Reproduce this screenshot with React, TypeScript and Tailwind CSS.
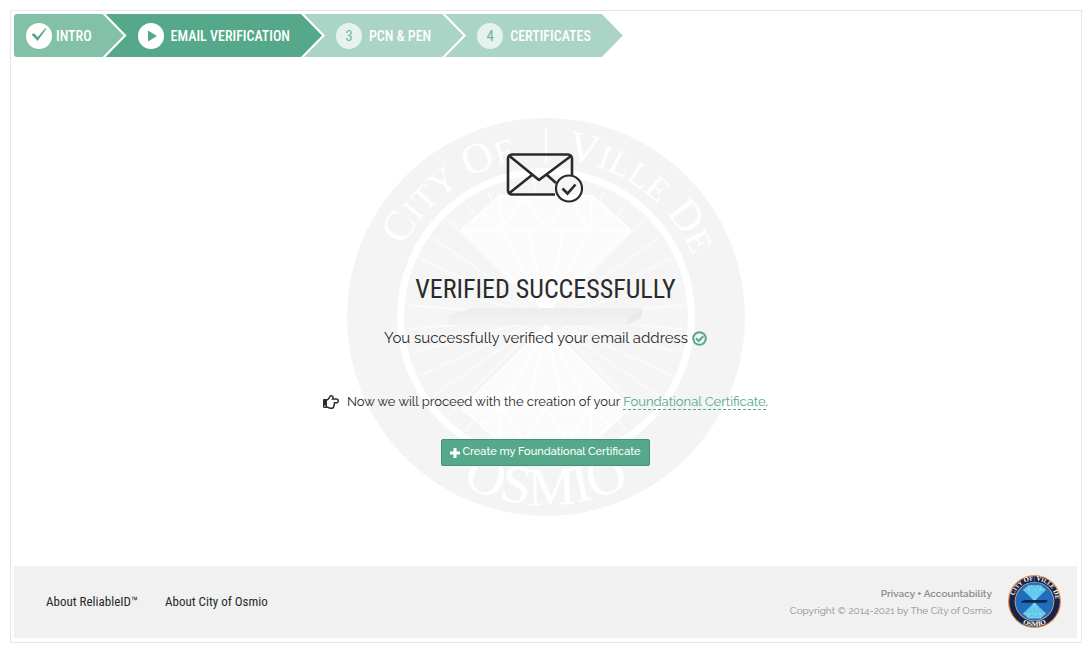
import { useId } from "react";
import type { ReactNode } from "react";
import { FaRegHandPointRight } from "react-icons/fa";

type SealPalette = {
  edge: string;
  ring: string;
  innerEdge: string;
  field: string;
  rays: string;
  gem: string;
  facet: string;
  barTop: string;
  barFront: string;
  barSide: string;
  letters: string;
};

type SealLettering = {
  weight: number;
  capital: number;
  small: number;
  leftStart: number;
  rightStart: number;
  bottom: number;
};

const watermark: SealPalette = {
  edge: "#f4f4f4",
  ring: "#f4f4f4",
  innerEdge: "#ffffff",
  field: "#f5f5f5",
  rays: "#fafafa",
  gem: "#fbfbfb",
  facet: "#fefefe",
  barTop: "#eeeeee",
  barFront: "#f1f1f1",
  barSide: "#eaeaea",
  letters: "#ffffff",
};

const fullColour: SealPalette = {
  edge: "#e08a45",
  ring: "#14244f",
  innerEdge: "#e39a5c",
  field: "#1f6dbd",
  rays: "#2173c6",
  gem: "#5cc4ea",
  facet: "#b4eafa",
  barTop: "#06101f",
  barFront: "#06101f",
  barSide: "#06101f",
  letters: "#ffffff",
};

const largeLettering: SealLettering = {
  weight: 400,
  capital: 43,
  small: 34,
  leftStart: 73,
  rightStart: 269,
  bottom: 54,
};

const badgeLettering: SealLettering = {
  weight: 700,
  capital: 52,
  small: 44,
  leftStart: 44,
  rightStart: 260,
  bottom: 54,
};

const rayAngles = Array.from({ length: 36 }, (_, i) => i * 10 + 5);

function Gem({ p }: { p: SealPalette }) {
  return (
    <g>
      <polygon points="-46,-121 46,-121 84,-87 0,-5 -84,-87" fill={p.gem} />
      <path
        d="M-46-121H46L84-87 0-5-84-87ZM-84-87H84M-46-121-44-87-22-121 0-87 22-121 44-87 46-121M-44-87 0-5 44-87M-18-87 0-5 18-87M-64-104-44-87M64-104 44-87"
        fill="none"
        stroke={p.facet}
        strokeWidth="2.5"
        strokeLinejoin="round"
      />
    </g>
  );
}

function Seal({
  p,
  lettering,
  className,
  decorative,
}: {
  p: SealPalette;
  lettering: SealLettering;
  className: string;
  decorative?: boolean;
}) {
  const id = useId();
  const top = `${id}-top`;
  const bottom = `${id}-bottom`;
  return (
    <svg
      viewBox="-199 -199 398 398"
      className={className}
      {...(decorative ? { "aria-hidden": true } : { role: "img", "aria-label": "City of Osmio" })}
    >
      <defs>
        <path id={top} d="M-159 0A159 159 0 0 1 159 0" />
        <path id={bottom} d="M-188 0A188 188 0 0 0 188 0" />
      </defs>
      <circle r="199" fill={p.edge} />
      <circle r="190" fill={p.ring} />
      <circle r="149" fill={p.innerEdge} />
      <circle r="142" fill={p.field} />
      {rayAngles.map((a) => (
        <line key={a} x1="0" y1="-20" x2="0" y2="-138" stroke={p.rays} strokeWidth="2" transform={`rotate(${a})`} />
      ))}
      <Gem p={p} />
      <g transform="translate(0 4) scale(1 -1)">
        <Gem p={p} />
      </g>
      <polygon points="-98,-1 -74,-9 96,-9 82,-1" fill={p.barTop} />
      <rect x="-98" y="-1" width="180" height="9" fill={p.barFront} />
      <polygon points="82,-1 96,-9 96,0 82,8" fill={p.barSide} />
      <g
        fill={p.letters}
        fontFamily="'Liberation Serif', serif"
        fontSize={lettering.capital}
        fontWeight={lettering.weight}
      >
        <text>
          <textPath href={`#${top}`} startOffset={lettering.leftStart}>
            C<tspan fontSize={lettering.small}>ITY</tspan> O<tspan fontSize={lettering.small}>F</tspan>
          </textPath>
        </text>
        <text>
          <textPath href={`#${top}`} startOffset={lettering.rightStart}>
            V<tspan fontSize={lettering.small}>ILLE</tspan> D<tspan fontSize={lettering.small}>E</tspan>
          </textPath>
        </text>
        <text fontSize={lettering.bottom} textAnchor="middle">
          <textPath href={`#${bottom}`} startOffset="50%">
            OSMIO
          </textPath>
        </text>
      </g>
      <rect x="-1" y="-188" width="2" height="34" fill={p.letters} />
    </svg>
  );
}

function EnvelopeCheck() {
  return (
    <svg viewBox="0 0 78 52" className="h-[52px] w-[78px]" fill="none" stroke="#292b2c" aria-hidden="true">
      <path
        d="M49 42.500H6a4 4 0 0 1-4-4V6.500a4 4 0 0 1 4-4H62a4 4 0 0 1 4 4V23M3.500 4 33 28 65 4M3.500 41 26 23M41 23l9 8"
        strokeWidth="2.600"
        strokeLinejoin="round"
      />
      <circle cx="63" cy="36.500" r="13" strokeWidth="2.200" />
      <path d="m56.500 36.500 5 5 8-9" strokeWidth="2.600" />
    </svg>
  );
}

const steps: { label: string; tone: string; badge: string; icon: ReactNode }[] = [
  {
    label: "INTRO",
    tone: "bg-[#83c0a8] pl-3 pr-8 gap-1 rounded-l-[3px] [clip-path:polygon(0_0,calc(100%-21px)_0,100%_50%,calc(100%-21px)_100%,0_100%)]",
    badge: "bg-white",
    icon: (
      <svg viewBox="0 0 26 26" className="size-[26px]" aria-hidden="true">
        <path d="m5.500 11.500 2.500-1.200 3.800 3.700 7.400-8.700 1 .7L11.600 18Z" fill="#55a98a" />
      </svg>
    ),
  },
  {
    label: "EMAIL VERIFICATION",
    tone: "-ml-[18px] bg-[#55a98a] pl-8 pr-8 gap-[7px] [clip-path:polygon(0_0,calc(100%-21px)_0,100%_50%,calc(100%-21px)_100%,0_100%,21px_50%)]",
    badge: "bg-white",
    icon: (
      <svg viewBox="0 0 26 26" className="size-[26px]" aria-hidden="true">
        <path d="M10 7.500 19 13l-9 5.500Z" fill="#55a98a" />
      </svg>
    ),
  },
  {
    label: "PCN & PEN",
    tone: "-ml-[18px] bg-[#aad4c5] pl-8 pr-8 gap-[7px] [clip-path:polygon(0_0,calc(100%-21px)_0,100%_50%,calc(100%-21px)_100%,0_100%,21px_50%)]",
    badge: "bg-[#e6f2ee]",
    icon: "3",
  },
  {
    label: "CERTIFICATES",
    tone: "-ml-[18px] bg-[#aad4c5] pl-8 pr-8 gap-[7px] [clip-path:polygon(0_0,calc(100%-21px)_0,100%_50%,calc(100%-21px)_100%,0_100%,21px_50%)]",
    badge: "bg-[#e6f2ee]",
    icon: "4",
  },
];

export default function App() {
  return (
    <div className="min-h-screen bg-white pt-[10px] pr-2 pb-1 pl-[10px] font-['Raleway','Lato',sans-serif] text-[#292b2c]">
      <div className="border border-[#e7e7e7] pt-[3px] pr-1 pb-1 pl-[3px]">
        <nav aria-label="Progress">
          <ol className="flex font-['Roboto_Condensed','Liberation_Sans_Narrow',sans-serif] text-[14px] font-medium leading-5 text-white">
            {steps.map((s) => (
              <li key={s.label} className={`flex h-[43px] items-center whitespace-nowrap ${s.tone}`}>
                <span
                  className={`flex size-[26px] items-center justify-center rounded-full text-[15px] font-normal text-[#6fb79c] ${s.badge}`}
                >
                  {s.icon}
                </span>
                {s.label}
              </li>
            ))}
          </ol>
        </nav>

        <main className="relative flex flex-col items-center pt-[95px] pb-[100px]">
          <Seal
            p={watermark}
            lettering={largeLettering}
            decorative
            className="absolute top-[61px] left-1/2 size-[398px] -translate-x-1/2"
          />
          <div className="relative flex flex-col items-center">
            <EnvelopeCheck />
            <h1 className="mt-[69px] font-['Roboto_Condensed','Liberation_Sans_Narrow',sans-serif] text-[26px] leading-8">
              VERIFIED SUCCESSFULLY
            </h1>
            <p className="mt-[21px] flex items-center gap-1 text-[15px] leading-6">
              You successfully verified your email address
              <svg
                viewBox="0 0 15 15"
                className="size-[15px]"
                fill="none"
                stroke="#55a98a"
                strokeWidth="2"
                aria-hidden="true"
              >
                <circle cx="7.5" cy="7.5" r="6.300" />
                <path d="m4 7.300 2.700 2.700 4.600-4.700" />
              </svg>
            </p>
            <p className="mt-10 flex items-center text-[13px] leading-6">
              <FaRegHandPointRight className="mr-2 size-4" aria-hidden="true" />
              <span>
                Now we will proceed with the creation of your{" "}
                <a href="#certificate" className="border-b border-dashed border-[#55a98a] text-[#55a98a]">
                  Foundational Certificate
                </a>
                .
              </span>
            </p>
            <button
              type="button"
              className="mt-[25px] flex h-[27px] items-center gap-[2px] rounded-[2px] border border-[#3f9474] bg-[#55a98a] px-2 text-[11px] font-medium text-white"
            >
              <svg viewBox="0 0 10 10" className="size-[10px]" fill="#ffffff" aria-hidden="true">
                <path d="M3.500 0h3v3.500H10v3H6.500V10h-3V6.500H0v-3h3.500Z" />
              </svg>
              Create my Foundational Certificate
            </button>
          </div>
        </main>

        <footer className="flex h-[72px] items-center justify-between bg-[#f1f1f1] pr-4 pb-px pl-8">
          <nav
            aria-label="About"
            className="flex gap-[27px] font-['Roboto_Condensed','Liberation_Sans_Narrow',sans-serif] text-[13px] leading-5"
          >
            <a href="#reliableid">About ReliableID™</a>
            <a href="#osmio">About City of Osmio</a>
          </nav>
          <div className="flex items-center gap-4">
            <div className="text-right text-[10px] leading-[17px] text-[#8f8f8f]">
              <p className="font-semibold text-[#8c8c8c]">
                <a href="#privacy">Privacy + Accountability</a>
              </p>
              <p>Copyright © 2014-2021 by The City of Osmio</p>
            </div>
            <Seal p={fullColour} lettering={badgeLettering} className="size-[53px]" />
          </div>
        </footer>
      </div>
    </div>
  );
}
